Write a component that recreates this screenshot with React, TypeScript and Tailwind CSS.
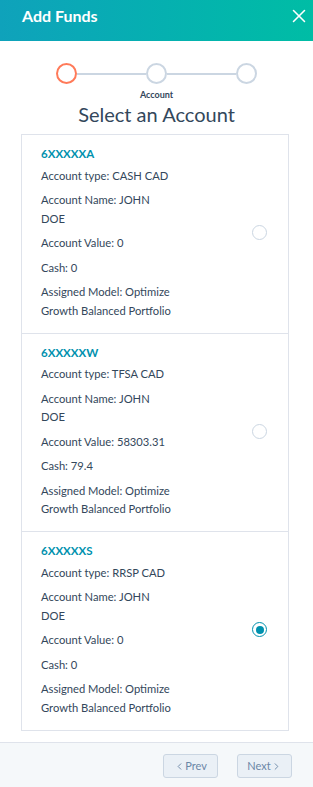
import { X, ChevronLeft, ChevronRight } from "lucide-react";

interface Account {
    id: string;
    type: string;
    name: string;
    value: string;
    cash: string;
    model: string;
    selected: boolean;
}

const accounts: Account[] = [
    { id: "6XXXXXA", type: "CASH CAD", name: "JOHN DOE", value: "0", cash: "0", model: "Optimize Growth Balanced Portfolio", selected: false },
    { id: "6XXXXXW", type: "TFSA CAD", name: "JOHN DOE", value: "58303.31", cash: "79.4", model: "Optimize Growth Balanced Portfolio", selected: false },
    { id: "6XXXXXS", type: "RRSP CAD", name: "JOHN DOE", value: "0", cash: "0", model: "Optimize Growth Balanced Portfolio", selected: true },
];

function Stepper() {
    return (
        <div className="flex flex-col items-center">
            <div className="flex items-center">
                <div className="w-[21px] h-[21px] rounded-full border-2 border-[#ff7a59] bg-white" />
                <div className="w-[69px] h-[2px] bg-[#cbd6e2]" />
                <div className="w-[21px] h-[21px] rounded-full border-2 border-[#cbd6e2] bg-white" />
                <div className="w-[69px] h-[2px] bg-[#cbd6e2]" />
                <div className="w-[21px] h-[21px] rounded-full border-2 border-[#cbd6e2] bg-white" />
            </div>
            <div className="mt-[5px] text-[9px] leading-[12px] font-bold text-[#33475b]">Account</div>
            <div className="mt-0 text-[20px] leading-[26px] font-normal text-[#33475b]">Select an Account</div>
        </div>
    );
}

function AccountCard(props: { account: Account; last: boolean }) {
    const a = props.account;
    return (
        <div className={"flex items-center pl-[19px] pr-[21px] pt-[10px] pb-[12.5px] " + (props.last ? "" : "border-b border-[#dfe3eb]")}>
            <div className="w-[132px] text-[11.2px] leading-[18.5px] text-[#33475b]">
                <div className="mb-[3px] font-bold text-[11.5px] text-[#0091ae]">{a.id}</div>
                <div className="mb-[6px]">Account type: {a.type}</div>
                <div className="mb-[6px]">Account Name: {a.name}</div>
                <div className="mb-[6px]">Account Value: {a.value}</div>
                <div className="mb-[6px]">Cash: {a.cash}</div>
                <div>Assigned Model: {a.model}</div>
            </div>
            <div className="ml-auto">
                {a.selected ? (
                    <div className="w-[15px] h-[15px] rounded-full border border-[#0091ae] flex items-center justify-center">
                        <div className="w-[8px] h-[8px] rounded-full bg-[#0091ae]" />
                    </div>
                ) : (
                    <div className="w-[15px] h-[15px] rounded-full border border-[#cbd6e2] bg-white" />
                )}
            </div>
        </div>
    );
}

export default function App() {
    return (
        <div className="w-[313px] h-[787px] flex flex-col bg-white font-['Lato',sans-serif] text-[#33475b]">
            <div className="h-[41px] shrink-0 flex justify-between pl-[22px] pr-[3px] pt-[6px] bg-linear-to-r from-[#0fa2bb] to-[#00bda5]">
                <div className="text-[16px] leading-[20px] font-bold text-white">Add Funds</div>
                <X className="w-[22px] h-[22px] -mt-[1px] text-white" strokeWidth={1.7} />
            </div>

            <div className="flex-1 pt-[22px]">
                <Stepper />
                <div className="mt-[7px] ml-[21px] w-[268px] border border-[#dfe3eb]">
                    {accounts.map((a, i) => (
                        <AccountCard key={a.id} account={a} last={i === accounts.length - 1} />
                    ))}
                </div>
            </div>

            <div className="h-[45px] shrink-0 flex justify-end items-center gap-[19px] pr-[21px] pt-[2px] border-t border-[#dfe3eb] bg-[#f5f8fa]">
                <button className="w-[55px] h-[24px] flex items-center justify-center rounded-[3px] border border-[#cbd6e2] bg-[#eaf0f6] text-[11px] text-[#6b87a6]">
                    <ChevronLeft className="w-[11px] h-[11px]" strokeWidth={2} />
                    Prev
                </button>
                <button className="w-[55px] h-[24px] flex items-center justify-center rounded-[3px] border border-[#cbd6e2] bg-[#eaf0f6] text-[11px] text-[#6b87a6]">
                    Next
                    <ChevronRight className="w-[11px] h-[11px]" strokeWidth={2} />
                </button>
            </div>
        </div>
    );
}
